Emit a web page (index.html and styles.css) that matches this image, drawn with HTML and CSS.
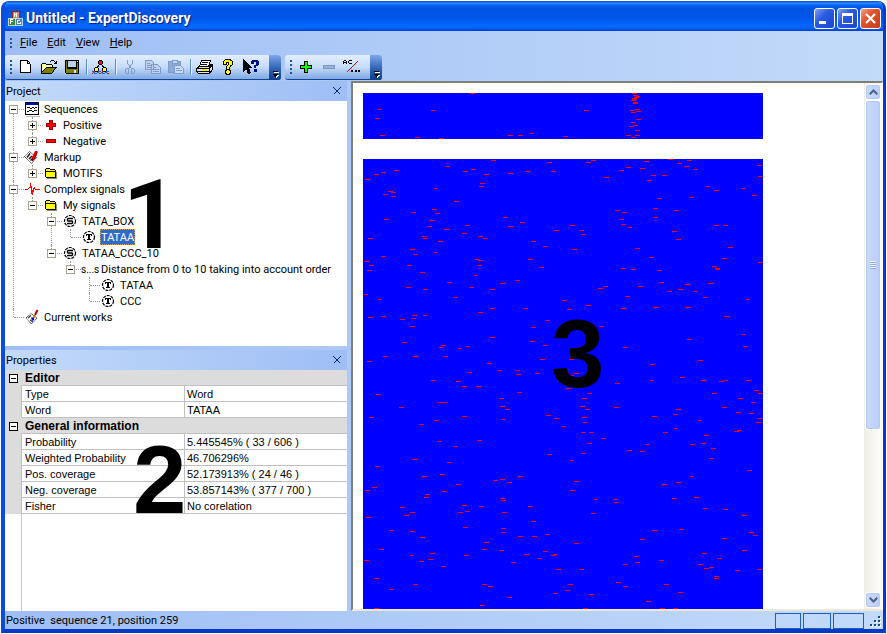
FILE: index.html
```html
<!DOCTYPE html>
<html lang="en">
<head>
<meta charset="utf-8">
<title>Untitled - ExpertDiscovery</title>
<link rel="stylesheet" href="styles.css">
</head>
<body>
<svg class="defs" width="0" height="0" aria-hidden="true">
  <symbol id="i-folder" viewBox="0 0 16 16"><path d="M3 4h4v1h5v7H3z" fill="#ff0"/><path d="M3 3h4v1H3zM2 4h1v8H2zM7 4h5v1H7zM12 5h1v7h-1zM3 12h10v1H3zM3 6h9v1H3z"/><path d="M13 7h1v7H4v-1h9z" fill="#888"/></symbol>
  <symbol id="i-seal-s" viewBox="0 0 16 16"><circle cx="8" cy="8" r="5.500" fill="#fff" stroke="#000" stroke-width="1.200" stroke-dasharray="3 1"/><path d="M11 5.500H6L5.500 6v1.500l.5.500h4l.5.500v1.500l-.5.500H5" fill="none" stroke="#000" stroke-width="1.300"/></symbol>
  <symbol id="i-seal-t" viewBox="0 0 16 16"><circle cx="8" cy="8" r="5.500" fill="#fff" stroke="#000" stroke-width="1.200" stroke-dasharray="3 1"/><path d="M5 7V5h6v2h-1V6H9v4h1v1H6v-1h1V6H6v1z"/></symbol>
  <symbol id="i-down" viewBox="0 0 9 9"><path d="M3 3h5v1H3zM3 6h5v1H7v1H6v1H5V8H4V7H3z" fill="#fff"/><path d="M2 2h5v1H2zM2 5h5v1H6v1H5v1H4V7H3V6H2z" fill="#000"/></symbol>
</svg>
<div class="window">
  <header class="titlebar">
    <svg class="app-icon" viewBox="0 0 16 16" width="16" height="16"><path d="M5 1h6l1 1v6H5z" fill="#d98c6c" stroke="#8b2d16"/><path d="M7 2.500v4M9.500 2.500v4M7 4.500h3" stroke="#fff"/><path d="M1 8h7v7H1z" fill="#3d8b4c" stroke="#bcd8b2"/><path d="M3.500 14v-4.500H6M3.500 11.500H6" stroke="#fff" fill="none"/><path d="M8 8h7v7H8z" fill="#4884a7" stroke="#c2dae8"/><path d="M13 10h-3v3.500h3V12" stroke="#fff" fill="none"/></svg>
    <h1>Untitled - ExpertDiscovery</h1>
    <button class="caption" aria-label="Minimize"><svg viewBox="0 0 19 19" width="19" height="19"><path d="M4 12h7v3H4z" fill="#fff"/></svg></button>
    <button class="caption" aria-label="Maximize"><svg viewBox="0 0 19 19" width="19" height="19"><path d="M4 4h11v11H4zM5 7v7h9V7z" fill="#fff" fill-rule="evenodd"/></svg></button>
    <button class="caption caption-close" aria-label="Close"><svg class="smooth" viewBox="0 0 19 19" width="19" height="19"><path d="M5 5l9 9M14 5l-9 9" stroke="#fff" stroke-width="2.200" fill="none"/></svg></button>
  </header>

  <nav class="menubar">
    <span class="grip"></span>
    <button><u>F</u>ile</button><button><u>E</u>dit</button><button><u>V</u>iew</button><button><u>H</u>elp</button>
  </nav>

  <div class="toolbars">
    <div class="toolbar">
      <span class="grip"></span>
      <button class="tool" aria-label="New"><svg viewBox="0 0 16 16"><path d="M3 2h7l3 3v9H3z" fill="#fff"/><path d="M2 1h8v1H3v11h9V5H9V2h1v2h2v1h1v9H2zM10 2h1v1h-1zM11 3h1v1h-1z"/></svg></button>
      <button class="tool" aria-label="Open"><svg viewBox="0 0 16 16"><path d="M1 5h4v1h6v3H5l-4 5z" fill="#ff9"/><path d="M5 9h10l-4 5H1z" fill="#808000"/><path d="M1 4h4v1H1zM5 5h6v1H5zM0 5h1v9H0zM11 6h1v2h-1zM5 8h11v1H5zM4 9h1v1H4zM3 10h1v1H3zM2 11h1v1H2zM1 12h1v1H1zM0 14h11v1H0zM14 9h1v1h-1zM13 10h1v1h-1zM12 11h1v2h-1zM11 13h1v1h-1zM9 2h1v1H9zM10 1h3v1h-3zM13 2h1v1h-1zM14 3h1v1h-1zM15 2h1v3h-3V4h2z"/></svg></button>
      <button class="tool" aria-label="Save"><svg viewBox="0 0 16 16"><path d="M1 1h14v14H2l-1-1z"/><path d="M2 2h1v8h10V4h1v10H2z" fill="#808000"/><path d="M4 2h8v6H4z" fill="#b9d1f3"/><path d="M13 2h1v1h-1zM10 11h2v3h-2z" fill="#dbe9fc"/></svg></button>
      <span class="divider"></span>
      <button class="tool" aria-label="Signal tree"><svg viewBox="0 0 17 16" class="wide"><path d="M8 5L4 10M9 5l4 5" stroke="#000" fill="none"/><path d="M0 15l4-4 4 4 4-4 4 4 1-1" stroke="#e00" fill="none"/><path d="M0 12l4 3 4-3 4 3 4-3 1 1" stroke="#2460e8" fill="none"/><path d="M7 1h3v1h1v3h-1v1H7V5H6V2h1z"/><path d="M7 2h3v3H7z" fill="#e11"/><path d="M3 8h3v1h1v3H6v1H3v-1H2V9h1zM11 8h3v1h1v3h-1v1h-3v-1h-1V9h1z"/><path d="M3 9h3v3H3zM11 9h3v3h-3z" fill="#ff3"/></svg></button>
      <span class="divider"></span>
      <button class="tool" aria-label="Cut" disabled><svg viewBox="0 0 16 16"><path d="M5.500 1v3l4 6M10.500 1v3l-4 6M4.500 9.500h2v5h-2l-1-1v-3zM9.500 9.500h2l1 1v3l-1 1h-2z" fill="none" stroke="#7d9ccb"/></svg></button>
      <button class="tool" aria-label="Copy" disabled><svg viewBox="0 0 16 16"><path d="M.5 1.500h6l2 2v7h-8zM6.500 5.500h6l3 3v6h-9z" fill="#bdd1ef" stroke="#7d9ccb"/><path d="M2 4.500h3M2 6.500h4M2 8.500h4M8 8.500h3M8 10.500h6M8 12.500h6" stroke="#7d9ccb"/></svg></button>
      <button class="tool" aria-label="Paste" disabled><svg viewBox="0 0 16 16"><path d="M.5 2.500h12v11H.5z" fill="#8da9d4" stroke="#7d9ccb"/><path d="M4 1h5v3H4z" fill="#c7d8f1" stroke="#7d9ccb"/><path d="M6.500 6.500h6l3 3v5h-9z" fill="#cbdcf5" stroke="#7d9ccb"/><path d="M8 9.500h4M8 11.500h6" stroke="#7d9ccb"/></svg></button>
      <span class="divider"></span>
      <button class="tool" aria-label="Print"><svg viewBox="0 0 17 16" class="wide"><path d="M5.500 1.500h9l-2 6h-9z" fill="#fff" stroke="#000"/><path d="M6 3.500h6M5 5.500h6" stroke="#000"/><path d="M3 7.500h10l2-2h1l.5 1v4l-3 4h-11l-2-2v-3z" fill="#dce5f3" stroke="#000"/><path d="M1 9.500h12v5M1 12.500h12M13 9.500l3-3" fill="none" stroke="#000"/><path d="M6 11h5" stroke="#ee0" stroke-width="2"/></svg></button>
      <button class="tool" aria-label="Help"><svg viewBox="0 0 16 16"><path d="M5 0h6v1h1v1h1v4h-1v1h-1v1h-1v2H6V7h1V6h1V4H7v2H3V2h1V1h1zM6 10h4v1h1v4h-1v1H6v-1H5v-4h1z"/><path d="M5 1h5v1h2v4h-2v2H9v2H7V7h1V6h1V3H6v2H4V2h1zM7 11h2v1h1v2H9v1H7v-1H6v-2h1z" fill="#ff0"/></svg></button>
      <button class="tool" aria-label="Context help"><svg viewBox="0 0 16 16"><path d="M0 0l9 9H6l2 5-3 1-2-5-3 3z"/><path d="M8 2h1V1h6v1h1v4h-1v1h-2v2h-2V6h2V3h-2v2H8zM11 10h3v3h-3z" fill="#00108c"/></svg></button>
      <button class="more" aria-label="Toolbar options"><svg viewBox="0 0 9 9" width="9" height="9"><use href="#i-down"/></svg></button>
    </div>
    <div class="toolbar">
      <span class="grip"></span>
      <button class="tool" aria-label="Add"><svg viewBox="0 0 16 16"><path d="M6 2h4v4h4v4h-4v4H6v-4H2V6h4z"/><path d="M7 3h2v4h4v2H9v4H7V9H3V7h4z" fill="#0f0"/></svg></button>
      <button class="tool" aria-label="Remove" disabled><svg viewBox="0 0 16 16"><path d="M2.500 6.500h11v3h-11z" fill="#9bb3da" stroke="#7d97c4"/></svg></button>
      <button class="tool" aria-label="Find word"><svg viewBox="0 0 17 16" class="wide"><path d="M.5 5V2.500l1-1h1l1 1V5M1 3.500h2M9 1.500H6.500l-1 1v1l1 1H9" fill="none" stroke="#000"/><path d="M14.500 2.500l-11 11" stroke="#e00"/><path d="M8 11h2v2H8zM12 11h2v2h-2zM15 11h2v2h-2z"/></svg></button>
      <button class="more" aria-label="Toolbar options"><svg viewBox="0 0 9 9" width="9" height="9"><use href="#i-down"/></svg></button>
    </div>
  </div>

  <main class="workspace">
    <div class="sidebar">
      <section class="pane project">
        <header class="pane-head"><h2>Project</h2><button class="close" aria-label="Close Project"><svg viewBox="0 0 8 8" width="8" height="8"><path d="M.5.5l7 7M7.500.5l-7 7" stroke="#0a246a"/></svg></button></header>
        <ul class="tree">
          <li><div class="node"><button class="toggle" aria-label="Collapse"></button><svg class="ico" viewBox="0 0 16 16"><path d="M2 15h14V2" fill="none" stroke="#bbb"/><path d="M1.500 1.500h13v12h-13z" fill="#fff" stroke="#000"/><path d="M2 2h12v2H2z" fill="#00c"/><path d="M3 6h3v1H3zM6 7h2v1H6zM8 6h2v1H8zM10 7h1v1h-1zM11 6h2v1h-2zM3 10h2v1H3zM5 9h3v1H5zM8 10h2v1H8zM10 9h3v1h-3z"/></svg><span class="text">Sequences</span></div>
            <ul>
              <li><div class="node"><button class="toggle plus" aria-label="Expand"></button><svg class="ico" viewBox="0 0 16 16"><path d="M6.500 3.500h3v3h3v3h-3v3h-3v-3h-3v-3h3z" fill="#f00" stroke="#a00000"/></svg><span class="text">Positive</span></div></li>
              <li><div class="node"><button class="toggle plus" aria-label="Expand"></button><svg class="ico" viewBox="0 0 16 16"><path d="M3.500 6.500h9v3h-9z" fill="#f00" stroke="#a00000"/></svg><span class="text">Negative</span></div></li>
            </ul></li>
          <li><div class="node"><button class="toggle" aria-label="Collapse"></button><svg class="ico smooth" viewBox="0 0 16 16"><path d="M.5 7.500l5-5 7 6-5 6z" fill="#fff" stroke="#222" stroke-dasharray="1 .6"/><path d="M3 8.500l3-4M5 10l3-3M6.500 11.500l2-2" fill="none" stroke="#222" stroke-width="1.500"/><path d="M11 2h2.500v2L11 10l-2 2-1-1V8z" fill="#e00"/><path d="M13 3l-2.500 7M8.500 9v3" stroke="#800" fill="none"/></svg><span class="text">Markup</span></div>
            <ul>
              <li><div class="node"><button class="toggle plus" aria-label="Expand"></button><svg class="ico"><use href="#i-folder"/></svg><span class="text">MOTIFS</span></div></li>
            </ul></li>
          <li><div class="node"><button class="toggle" aria-label="Collapse"></button><svg class="ico" viewBox="0 0 16 16"><path d="M1 8h3v1H1zM4 7h1v1H4zM5 6h1v1H5zM6 2h1v5H6zM7 5h1v8H7zM8 9h1v5H8zM9 7h1v4H9zM10 6h1v2h-1zM11 8h5v1h-5z" fill="#f00"/></svg><span class="text">Complex signals</span></div>
            <ul>
              <li><div class="node"><button class="toggle" aria-label="Collapse"></button><svg class="ico"><use href="#i-folder"/></svg><span class="text">My signals</span></div>
                <ul>
                  <li><div class="node"><button class="toggle" aria-label="Collapse"></button><svg class="ico smooth"><use href="#i-seal-s"/></svg><span class="text">TATA_BOX</span></div>
                    <ul>
                      <li><div class="node"><svg class="ico smooth"><use href="#i-seal-t"/></svg><span class="text selected">TATAA</span></div></li>
                    </ul></li>
                  <li><div class="node"><button class="toggle" aria-label="Collapse"></button><svg class="ico smooth"><use href="#i-seal-s"/></svg><span class="text">TATAA_CCC_10</span></div>
                    <ul>
                      <li><div class="node"><button class="toggle" aria-label="Collapse"></button><span class="ico ico-text">s...s</span><span class="text">Distance from 0 to 10 taking into account order</span></div>
                        <ul>
                          <li><div class="node"><svg class="ico smooth"><use href="#i-seal-t"/></svg><span class="text">TATAA</span></div></li>
                          <li><div class="node"><svg class="ico smooth"><use href="#i-seal-t"/></svg><span class="text">CCC</span></div></li>
                        </ul></li>
                    </ul></li>
                </ul></li>
            </ul></li>
          <li><div class="node"><svg class="ico smooth" viewBox="0 0 16 16"><path d="M2 9l5-4.500L13 9l-5.500 6z" fill="#fff" stroke="#222" stroke-dasharray="1 .6"/><path d="M4 9l3-2.500M6 11l3 2" stroke="#444" stroke-width="1.500"/><path d="M13.500 1L11 6" stroke="#a00" stroke-width="2"/><path d="M11 6L9.500 9" stroke="#a80" stroke-width="2"/><path d="M7 8.500h3v2.500l-2 1z" fill="#00f"/></svg><span class="text">Current works</span></div></li>
        </ul>
        <span class="callout callout-1">1</span>
      </section>
      <section class="pane properties">
        <header class="pane-head"><h2>Properties</h2><button class="close" aria-label="Close Properties"><svg viewBox="0 0 8 8" width="8" height="8"><path d="M.5.5l7 7M7.500.5l-7 7" stroke="#0a246a"/></svg></button></header>
        <div class="grid-area">
          <table>
            <colgroup><col class="c-gutter"><col class="c-name"><col></colgroup>
            <tbody>
              <tr class="group"><td><button class="box" aria-label="Collapse Editor"></button></td><th colspan="2">Editor</th></tr>
              <tr><td></td><th>Type</th><td>Word</td></tr>
              <tr><td></td><th>Word</th><td>TATAA</td></tr>
              <tr class="group"><td><button class="box" aria-label="Collapse General information"></button></td><th colspan="2">General information</th></tr>
              <tr><td></td><th>Probability</th><td>5.445545% ( 33 / 606 )</td></tr>
              <tr><td></td><th>Weighted Probability</th><td>46.706296%</td></tr>
              <tr><td></td><th>Pos. coverage</th><td>52.173913% ( 24 / 46 )</td></tr>
              <tr><td></td><th>Neg. coverage</th><td>53.857143% ( 377 / 700 )</td></tr>
              <tr><td></td><th>Fisher</th><td>No corelation</td></tr>
            </tbody>
          </table>
        </div>
        <span class="callout callout-2">2</span>
      </section>
    </div>

    <section class="document">
      <div class="maps">
        <!-- Signal maps: three units per pixel, one 15x3 mark per occurrence -->
        <svg class="map" viewBox="0 0 1200 138" width="400" height="46"><path transform="translate(-24 -24)" d="M345 25h15M831 25h15M834 31h15M840 34h15M837 37h15M831 40h15M831 43h15M828 46h15M834 52h15M834 55h15M66 73h15M228 76h15M687 76h15M825 76h15M840 73h15M843 79h15M828 82h15M60 100h15M843 103h15M828 112h15M834 121h15M822 124h15M840 136h15M522 145h15M75 151h15M459 151h15M489 151h15M813 151h15M840 151h15M180 157h15M624 154h15M828 157h15M252 160h15"/></svg>
        <svg class="map" viewBox="0 0 1200 1350" width="400" height="450">
          <path transform="translate(-24 -222)" d="M408 226h15M270 244h15M117 256h15M78 262h15M57 268h15M30 283h15M324 259h15M348 253h15M387 268h15M459 265h15M510 259h15M576 232h15M588 259h15M693 232h15M708 226h15M747 277h15M792 256h15M813 247h15M855 250h15M867 229h15M939 223h15M966 235h15M987 244h15M996 226h15M1014 253h15M888 271h15M921 271h15M876 286h15M1206 241h15M1209 274h15M375 295h15M372 304h15M234 310h15M99 319h15M108 322h15M84 328h15M108 334h15M297 349h15M1050 304h15M1077 316h15M1158 310h15M1191 331h15M1002 337h15M906 340h15M894 370h15M957 376h15M168 382h15M231 373h15M240 385h15M225 406h15M87 403h15M216 424h15M267 433h15M330 421h15M321 445h15M444 397h15M459 424h15M495 412h15M597 436h15M645 421h15M672 436h15M678 448h15M780 376h15M801 382h15M792 403h15M798 418h15M816 427h15M894 397h15M951 439h15M1077 421h15M1104 421h15M963 463h15M39 460h15M201 454h15M204 460h15M249 469h15M369 454h15M384 460h15M528 469h15M564 484h15M651 493h15M840 490h15M1119 487h15M165 493h15M174 508h15M234 502h15M78 514h15M27 529h15M360 523h15M369 526h15M519 523h15M882 517h15M1101 520h15M1209 532h15"/>
          <path transform="translate(-24 303)" d="M42 16h15M156 16h15M366 16h15M36 31h15M195 37h15M354 46h15M552 22h15M798 25h15M828 28h15M906 31h15M1071 19h15M1080 25h15M1080 28h15M276 67h15M435 70h15M480 61h15M153 82h15M204 88h15M342 82h15M405 88h15M24 103h15M294 112h15M66 118h15M729 85h15M744 79h15M849 79h15M912 67h15M936 94h15M969 88h15M990 73h15M1014 94h15M1059 70h15M1044 112h15M810 109h15M1170 118h15M621 121h15M693 136h15M636 148h15M798 145h15M897 142h15M993 142h15M405 145h15M369 157h15M504 145h15M39 172h15M78 169h15M135 178h15M171 166h15M168 175h15M204 166h15M165 199h15M141 247h15M405 232h15M570 181h15M528 202h15M525 244h15M564 256h15M732 199h15M1107 169h15M1158 223h15M1164 259h15M996 238h15M804 262h15M258 256h15M252 262h15M330 259h15M306 265h15M84 289h15M174 289h15M264 289h15M36 304h15M396 310h15M555 298h15M642 298h15M426 331h15M480 331h15M483 343h15M336 337h15M540 340h15M657 340h15M642 346h15M606 361h15M633 385h15M228 361h15M303 364h15M321 379h15M363 379h15M486 397h15M63 403h15M432 415h15M780 370h15M885 313h15M1029 301h15M882 361h15M975 352h15M1038 361h15M1092 364h15M1104 361h15M1173 361h15M1197 391h15M1209 400h15M1071 400h15M1149 415h15M696 400h15M681 415h15M675 439h15M690 448h15M681 472h15M684 487h15M777 442h15M249 427h15M264 427h15M435 439h15M450 448h15M438 478h15M132 442h15M42 472h15M321 469h15M237 481h15M192 493h15M573 466h15M597 475h15M618 499h15M678 517h15M702 517h15M738 535h15M891 469h15M954 463h15M963 448h15M1026 481h15M954 505h15M924 517h15M1047 526h15M1137 514h15M1146 511h15M1143 457h15M1101 442h15M1188 427h15M1182 460h15M1206 475h15M1203 487h15"/>
          <path transform="translate(-24 828)" d="M366 16h15M246 19h15M294 34h15M171 73h15M276 82h15M60 94h15M696 25h15M678 55h15M576 58h15M642 76h15M870 28h15M816 46h15M855 49h15M1005 28h15M1038 25h15M1068 40h15M1062 70h15M1176 106h15M201 124h15M255 118h15M303 148h15M414 136h15M435 133h15M456 142h15M489 124h15M51 157h15M30 166h15M261 169h15M210 178h15M207 187h15M657 139h15M645 166h15M921 148h15M963 142h15M1002 124h15M435 190h15M438 196h15M321 211h15M372 214h15M330 229h15M309 232h15M441 232h15M519 214h15M135 217h15M165 232h15M147 241h15M33 247h15M714 193h15M774 193h15M777 202h15M951 190h15M1017 187h15M1044 220h15M708 235h15M1104 223h15M1161 241h15M528 259h15M324 277h15M438 280h15M438 292h15M102 286h15M165 289h15M195 307h15M489 304h15M531 304h15M570 298h15M891 286h15M972 283h15M855 313h15M1182 292h15M1194 301h15M1101 310h15M387 322h15M657 325h15M72 343h15M381 343h15M432 346h15M507 358h15M564 349h15M588 361h15M594 358h15M546 370h15M468 382h15M327 361h15M225 355h15M162 361h15M219 373h15M192 379h15M27 376h15M258 394h15M603 403h15M672 403h15M837 364h15M840 382h15M804 388h15M912 376h15M1041 355h15M1086 370h15M1029 388h15M1047 400h15M1062 397h15M1077 424h15M1077 430h15M1140 406h15M1206 403h15M1161 346h15M57 430h15M174 448h15M381 448h15M399 454h15M639 448h15M630 466h15M594 475h15M702 478h15M783 442h15M804 454h15M927 448h15M969 472h15M102 463h15M456 487h15M375 511h15M873 499h15M57 520h15M684 520h15M915 520h15M954 520h15"/>
        </svg>
        <span class="callout callout-3">3</span>
      </div>
      <div class="scrollbar">
        <button class="arrow" aria-label="Scroll up"><svg class="smooth" viewBox="0 0 9 6" width="9" height="6"><path d="M.7 5.300l3.800-3.800 3.800 3.800" fill="none" stroke="#4d6185" stroke-width="2"/></svg></button>
        <div class="track"><div class="thumb"><span></span></div></div>
        <button class="arrow" aria-label="Scroll down"><svg class="smooth" viewBox="0 0 9 6" width="9" height="6"><path d="M.7.7l3.800 3.800L8.300.7" fill="none" stroke="#4d6185" stroke-width="2"/></svg></button>
      </div>
    </section>
  </main>

  <footer class="statusbar">
    <p>Positive &nbsp;sequence 21, position 259</p>
    <span class="cell cell-s"></span><span class="cell cell-m"></span><span class="cell cell-l"></span>
    <svg class="sizer" viewBox="0 0 12 12" width="12" height="12"><path d="M9 1h2v2H9zM5 5h2v2H5zM9 5h2v2H9zM1 9h2v2H1zM5 9h2v2H5zM9 9h2v2H9z" fill="#fff"/><path d="M8 0h2v2H8zM4 4h2v2H4zM8 4h2v2H8zM0 8h2v2H0zM4 8h2v2H4zM8 8h2v2H8z" fill="#10479a"/></svg>
  </footer>
</div>
</body>
</html>
```
FILE: styles.css
```css
* { box-sizing: border-box; }
body {
  margin: 0;
  height: 100vh;
  padding: 1px;
  background: #fff;
  color: #000;
  font: 11px/16px Roboto, "Liberation Sans", sans-serif;
  overflow: hidden;
}
h1, h2, p, ul { margin: 0; padding: 0; font-size: inherit; font-weight: inherit; }
ul { list-style: none; }
button { margin: 0; padding: 0; border: 0; background: none; font: inherit; color: inherit; }
svg { display: block; shape-rendering: crispEdges; }
svg.smooth { shape-rendering: auto; }
.defs { position: absolute; }

.window {
  display: flex;
  flex-direction: column;
  height: 100%;
  border: solid;
  border-color: #0a4be0 #0838c8 #0838c8 #0a4be0;
  border-width: 0 3px 4px 4px;
  border-radius: 8px 8px 0 0;
  background: linear-gradient(90deg, #9ebef5, #c3daf9);
  overflow: hidden;
}

/* Title bar */
.titlebar {
  display: flex;
  align-items: center;
  gap: 2px;
  height: 30px;
  flex: none;
  margin: 0 -3px 0 -4px;
  padding: 4px 5px 0 6px;
  background: linear-gradient(#0842c8 0, #2a8cff 7%, #0a62f0 14%, #0054e3 25%, #0056e8 55%, #0468fc 82%, #0564f8 90%, #003dd0 100%);
}
.titlebar h1 {
  flex: 1;
  padding-left: 1px;
  color: #fff;
  font: bold 14px/18px Roboto, sans-serif;
  text-shadow: 1px 1px 1px #0a1883;
}
.caption {
  width: 21px;
  height: 21px;
  border: 1px solid #fff;
  border-radius: 3px;
  background: linear-gradient(135deg, #7da0f2, #2a5be0 40%, #1c46cf);
}
.caption-close { background: linear-gradient(135deg, #f0a088, #e0532c 40%, #c83a14); }

/* Menu and tool bars */
.menubar { display: flex; align-items: center; height: 23px; flex: none; }
.menubar button { padding: 0 5px; height: 18px; }
.grip {
  width: 2px;
  height: 15px;
  margin: 0 2px 0 5px;
  flex: none;
  background: repeating-linear-gradient(#27538f 0 2px, transparent 2px 4px);
}
.menubar .grip { margin-right: 3px; height: 10px; }
.toolbars { display: flex; gap: 4px; height: 27px; padding: 1px 0; flex: none; }
.toolbar {
  display: flex;
  align-items: center;
  border-radius: 3px;
  border-bottom: 1px solid #0f4592;
  background: linear-gradient(#e3eefe, #c6dcf9 50%, #7fa8e3);
}
.tool { display: grid; place-items: center; width: 23px; height: 22px; }
.tool svg { width: 16px; height: 16px; }
.tool svg.wide { width: 17px; }
.divider { width: 1px; height: 16px; margin: 0 2px 0 3px; background: #5a8bd2; box-shadow: 1px 0 #e8f1fd; }
.more {
  display: grid;
  place-items: end center;
  align-self: stretch;
  width: 12px;
  margin: 0 0 -1px 7px;
  padding-bottom: 2px;
  border-radius: 0 3px 3px 0;
  background: linear-gradient(#7da7ea, #3568b8 50%, #0c3d91);
}

/* Workspace */
.workspace { flex: 1; min-height: 0; display: grid; grid-template-columns: 342px minmax(0, 1fr); gap: 4px; }
.sidebar { display: flex; flex-direction: column; gap: 4px; min-height: 0; }
.pane { position: relative; display: flex; flex-direction: column; min-height: 0; flex: 1 1 0; }
.project { flex-grow: 265; }
.properties { flex-grow: 261; }
.pane-head {
  display: flex;
  align-items: center;
  justify-content: space-between;
  height: 20px;
  flex: none;
  padding: 0 6px 0 1px;
  background: linear-gradient(90deg, #c3daf9, #9ebef5);
}
.pane-head h2 { height: 20px; line-height: 22px; }
.close { display: grid; place-items: center; width: 8px; height: 8px; }

/* Project tree */
.tree { flex: 1; background: #fff; }
.tree ul { padding-left: 19px; }
.tree li { position: relative; }
.tree li::before {
  content: "";
  position: absolute;
  left: 8px;
  top: 0;
  bottom: 0;
  border-left: 1px dotted #999;
}
.tree li:last-child::before { bottom: auto; height: 8px; }
.tree > li:first-child::before { top: 8px; }
.node { position: relative; display: flex; align-items: center; height: 16px; padding-left: 19px; white-space: nowrap; }
.node::before { content: ""; position: absolute; left: 9px; top: 8px; width: 10px; border-top: 1px dotted #999; }
.toggle {
  position: absolute;
  left: 4px;
  top: 4px;
  width: 9px;
  height: 9px;
  border: 1px solid #a5a18e;
  background: linear-gradient(#000, #000) center / 5px 1px no-repeat, #fff;
}
.toggle.plus { background: linear-gradient(#000, #000) center / 5px 1px no-repeat, linear-gradient(#000, #000) center / 1px 5px no-repeat, #fff; }
.ico { flex: none; width: 16px; height: 16px; white-space: nowrap; }
.ico-text { font-size: 10px; line-height: 18px; }
.text { height: 16px; margin-left: 3px; padding: 0 1px; line-height: 18px; }
.selected { background: #316ac5; color: #fff; outline: 1px dotted #e0a040; outline-offset: -1px; }

/* Property grid */
.grid-area {
  flex: 1;
  background: linear-gradient(#c8c8c8, #c8c8c8) 16px 0 / 1px 100% no-repeat, #fff;
  font-family: "Liberation Sans", Arial, sans-serif;
}
table { width: 100%; border-collapse: separate; border-spacing: 0; table-layout: fixed; }
.c-gutter { width: 16px; }
.c-name { width: 163px; }
tr { height: 16px; }
td, th { height: 16px; padding: 1px 0 0 2px; font-weight: normal; text-align: left; line-height: 14px; border-bottom: 1px solid #c0c0c0; border-left: 1px solid #c0c0c0; white-space: nowrap; }
th { padding-left: 3px; }
td:first-child { padding: 0; background: #dcdcdc; border: 0; }
.group th { font-weight: bold; font-size: 12px; background: #dcdcdc; border-left-color: #dcdcdc; }
.box { display: block; width: 9px; height: 9px; margin: 0 0 0 4px; border: 1px solid #000; background: linear-gradient(#000, #000) center / 5px 1px no-repeat, #fff; }

/* Document */
.document {
  display: flex;
  min-height: 0;
  min-width: 0;
  border: 2px solid;
  border-color: #808078 #fff #ece9d8 #808078;
  border-right-width: 1px;
  background: #fff;
}
.maps { position: relative; flex: 1; min-width: 0; padding: 10px 10px 0; overflow: hidden; }
.map { background: #00f; stroke: #f00; stroke-width: 3; fill: none; }
.map + .map { margin-top: 20px; }
.scrollbar { display: flex; flex-direction: column; width: 18px; padding: 1px; background: linear-gradient(90deg, #eeede5, #fefefb); }
.track { flex: 1; min-height: 0; }
.arrow, .thumb {
  display: grid;
  place-items: center;
  border: 1px solid #fff;
  border-radius: 3px;
  background: linear-gradient(90deg, #cbdbfe, #bacdfb);
  box-shadow: inset 0 0 0 1px #b4c8f6;
}
.arrow { width: 16px; height: 16px; flex: none; }
.thumb { width: 16px; height: 67%; }
.thumb span { width: 6px; height: 8px; background: repeating-linear-gradient(#eef4fe 0 1px, #8cb0f8 1px 2px); }

/* Status bar */
.statusbar { display: flex; align-items: flex-end; gap: 2px; height: 18px; flex: none; }
.statusbar p { flex: 1; height: 18px; padding-left: 1px; line-height: 20px; }
.cell { height: 16px; border: 1px solid #1a5fc4; }
.cell-s { width: 26px; }
.cell-m { width: 28px; }
.cell-l { width: 31px; }
.sizer { margin: 0 1px 1px 4px; }

/* Numbered callouts over the panes */
.callout { position: absolute; font: bold 96px/96px "Liberation Sans", Arial, sans-serif; pointer-events: none; }
.callout-1 { left: 118px; top: 86px; font-family: Roboto, Arial, sans-serif; }
.callout-2 { left: 128px; top: 82px; }
.callout-3 { left: 198px; top: 223px; }
```
